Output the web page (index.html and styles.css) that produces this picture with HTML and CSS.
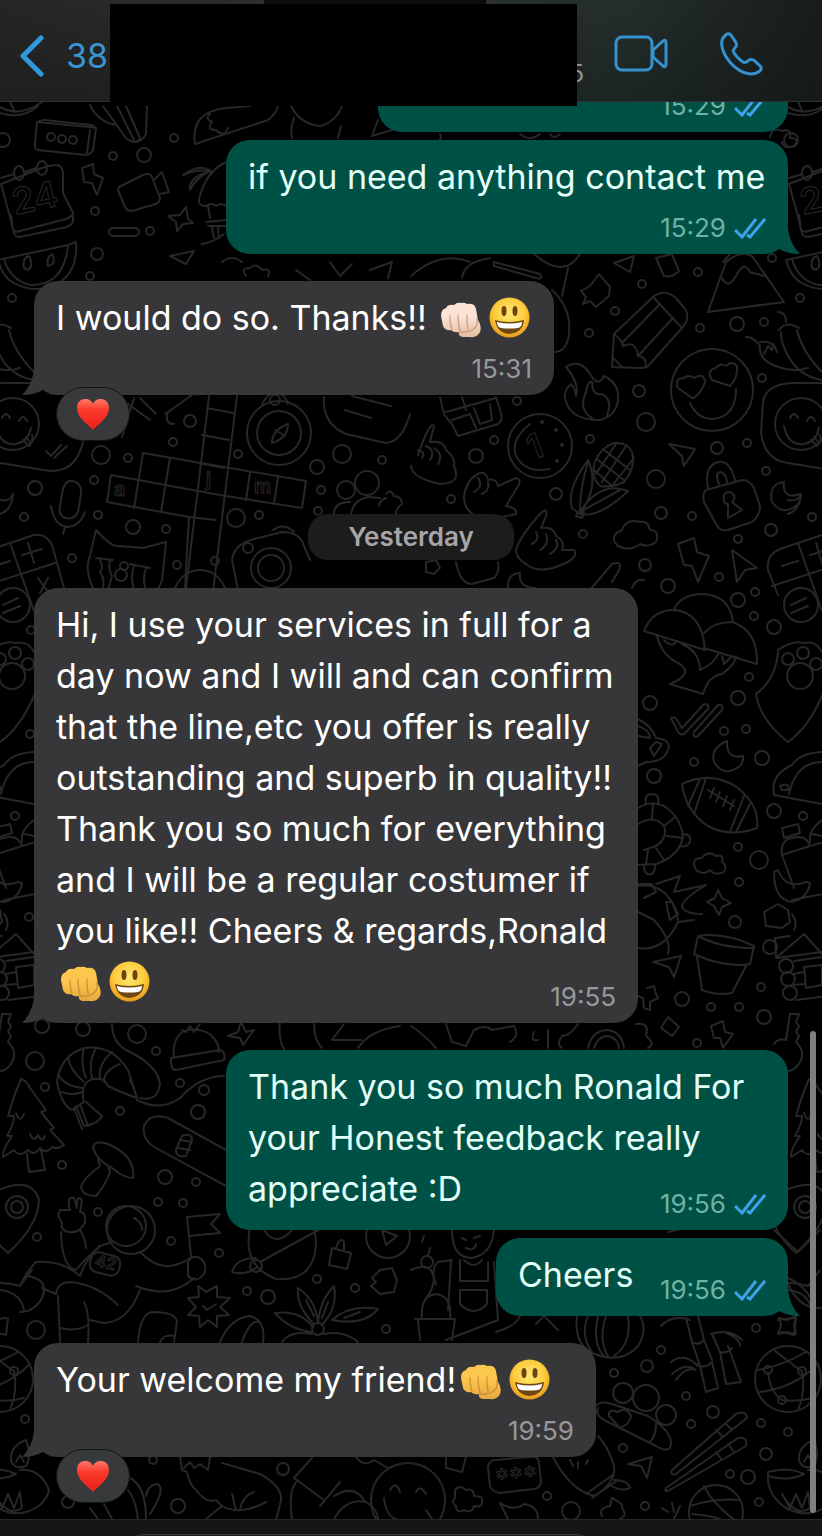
FILE: index.html
```
<!DOCTYPE html>
<html lang="en">

<head>
  <title>Chat</title>
  <meta charset="utf-8">
  <meta name="viewport" content="width=device-width, initial-scale=1">
  <link rel="stylesheet" href="styles.css">
</head>

<body>

  <!-- shared shapes -->
  <svg class="defs" width="0" height="0" aria-hidden="true">
    <defs>
      <radialGradient id="faceFill" cx="50%" cy="40%" r="60%">
        <stop offset="0" stop-color="#ffe873"/>
        <stop offset="0.65" stop-color="#fdcb3c"/>
        <stop offset="1" stop-color="#e9981a"/>
      </radialGradient>
      <linearGradient id="heartFill" x1="0" y1="0" x2="0" y2="1">
        <stop offset="0" stop-color="#ff7a6b"/>
        <stop offset="0.35" stop-color="#fb3a2c"/>
        <stop offset="1" stop-color="#e81f14"/>
      </linearGradient>
      <linearGradient id="fistShade" x1="0" y1="0" x2="0" y2="1">
        <stop offset="0.4" stop-color="#b5601c" stop-opacity="0"/>
        <stop offset="1" stop-color="#b5601c" stop-opacity="0.3"/>
      </linearGradient>
      <symbol id="smile" viewBox="0 0 41 41">
        <circle cx="20.500" cy="20.500" r="20" fill="url(#faceFill)"/>
        <ellipse cx="15" cy="14" rx="2.500" ry="5" fill="#6b4410"/>
        <ellipse cx="26" cy="14" rx="2.500" ry="5" fill="#6b4410"/>
        <path d="M6 23 Q20 27 35 23 Q34 36 20 37 Q8 36 6 23Z" fill="#6e4712"/>
        <path d="M8 25 Q20 28 33 25 Q33 30 29 31 Q20 32 12 31 Q8 30 8 25Z" fill="#fff"/>
      </symbol>
      <symbol id="fist" viewBox="0 0 41 36">
        <path id="fistShape" d="M1 14 Q1 7 6 6 Q8 2 14 3 Q17 0 21 1 Q24 0 27 2 Q35 1 36 7 L38 18 Q42 24 40 30 Q37 36 30 35 L23 35 Q18 34 19 30 Q14 31 11 28 Q5 29 3 24 Z" fill="currentColor"/>
        <path d="M1 14 Q1 7 6 6 Q8 2 14 3 Q17 0 21 1 Q24 0 27 2 Q35 1 36 7 L38 18 Q42 24 40 30 Q37 36 30 35 L23 35 Q18 34 19 30 Q14 31 11 28 Q5 29 3 24 Z" fill="url(#fistShade)"/>
        <path d="M10 14 Q10 22 12 27 M18 13 Q18 22 20 29 M27 13 Q27 22 28 27 M20 30 Q29 31 35 26 Q38 23 37 16" fill="none" stroke="#8a4a1c" stroke-opacity="0.350" stroke-width="1.500" stroke-linecap="round"/>
      </symbol>
      <symbol id="heart" viewBox="0 0 34 33">
        <path d="M17 32 C12 26 1 20 1 10 C1 4 5 1 9 1 C13 1 16 3 17 6 C18 3 21 1 25 1 C29 1 33 4 33 10 C33 20 22 26 17 32Z" fill="url(#heartFill)"/>
      </symbol>
      <symbol id="checks" viewBox="0 0 32 22">
        <path d="M1 13 L8 20 L22 2 M13 18 L16 20 L31 2" fill="none" stroke="#3fa3ea" stroke-width="3"/>
      </symbol>
      <symbol id="tail" viewBox="0 0 30 26">
        <path d="M12 0 C11 10 7 19 0 26 Q12 26 21 21 L30 26 V0Z" fill="currentColor"/>
      </symbol>
    </defs>
  </svg>

  <header class="header">
    <a class="back" href="#chats" aria-label="Back, 38 unread chats">
      <svg width="24" height="42" viewBox="0 0 24 42" aria-hidden="true"><path d="M21 3 L3 21 L21 39"/></svg>
      <span>38</span>
    </a>
    <div class="contact"></div>
    <span class="number">5</span>
    <div class="actions">
      <button type="button" aria-label="Video call">
        <svg width="54" height="37" viewBox="0 0 54 37" aria-hidden="true">
          <rect x="2" y="2" width="36" height="33" rx="6"/>
          <path d="M39 15 L49 6 Q52 4 52 8 V29 Q52 33 49 31 L39 22Z"/>
        </svg>
      </button>
      <button type="button" aria-label="Voice call">
        <svg width="43" height="44" viewBox="0 0 130 132" aria-hidden="true">
          <path class="phone" d="M14 12 Q4 20 5 38 C10 75 45 118 88 126 Q108 128 120 118 Q128 110 122 103 L104 86 Q98 80 88 84 L80 90 Q72 94 66 88 Q50 76 42 62 Q38 56 42 52 L48 44 Q52 36 46 28 L34 10 Q28 2 20 6 Z"/>
        </svg>
      </button>
    </div>
  </header>

  <main class="chat">
    <svg class="wallpaper" viewBox="0 102 822 1417" preserveAspectRatio="xMidYMin slice" aria-hidden="true">
      <!-- this column shows on both sides, one tile apart -->
      <g id="edge">
        <path d="M0 107 Q20 118 42 102 M0 113 Q22 120 38 106 M10 102 L15 112"/>
        <circle cx="3" cy="140" r="7"/>
        <path d="M1 178 L14 174 M25 172 L36 168 M47 166 L58 165 Q62 167 63 172 L63 193 L73 213 L73 221 Q72 225 67 227 L20 237 Q15 237 14 233 L9 213 L1 184Z M11 215 L13 230 Q16 233 20 231 L66 219 Q72 217 73 213"/>
        <ellipse cx="19" cy="173" rx="5" ry="7"/><ellipse cx="42" cy="168" rx="5" ry="7"/>
        <text x="15" y="215" font-size="36" transform="rotate(-12 15 215)">24</text>
        <path d="M-2 260 L68 245 76 242 Q78 270 60 282 Q36 296 12 282 Q2 275 -2 260 M4 259 Q10 280 30 285 Q64 286 68 245 M24 268 Q22 258 29 256 Q34 266 28 270Z M48 266 Q46 258 52 254 Q57 264 48 266"/>
        <path d="M-28 346 Q-34 337 -42 337 M-28 342 Q-14 340 -11 352 M-28 346 Q-30 362 -6 368 Q8 372 20 368 M-7 332 Q-8 345 6 365 Q18 378 34 380 M9 330 Q14 352 34 372 M-9 330 Q-2 320 11 328 M-2 322 Q-2 312 -10 312 M-24 354 L-20 346 -16 350 -14 344"/>
        <path d="M34 383 L5 383 Q-22 384 -25 402 L-27 432 Q-24 460 0 463 L50 471 Q76 472 83 442 M46 451 L51 456 61 445 M54 458 L67 446"/>
        <circle cx="13" cy="424" r="26"/>
        <path d="M2 418 Q6 410 10 418 M19 421 Q23 413 27 421 M-4 426 Q0 446 16 444 Q28 442 31 428 M23 440 L29 446 Q34 442 32 435 M26 437 L30 442"/>
        <path d="M0 500 Q10 502 13 494 Q12 510 0 514"/>
        <path d="M-10 595 L-20 570 Q-22 555 -8 549 L34 535 Q46 533 52 545 L64 588 M10 543 L34 611 M-16 586 L55 563 M22 555 L42 549 M28 543 L34 563 M-6 566 L10 561 M38 578 L48 592 M48 578 L40 593"/>
        <circle cx="13" cy="605" r="17"/>
        <path d="M3 605 L18 598 M3 613 L20 606"/>
        <circle cx="12" cy="676" r="13"/><circle cx="15" cy="653" r="6"/><circle cx="28" cy="664" r="6"/><circle cx="0" cy="659" r="6"/>
        <path d="M-10 650 Q-11 678 -32 694 Q-28 720 0 742 Q20 728 34 696 L40 680 Q44 658 34 652 Q28 640 16 643 Q4 640 -10 650"/>
        <path d="M-14 795 Q-18 775 4 765 Q12 753 34 752 M-14 795 L34 804 M1 794 Q8 762 34 762 M-6 790 L-8 786 Q2 782 0 790Z"/>
        <path d="M-6 855 L6 888 M-6 855 Q-8 840 4 838 Q18 834 22 846 L-6 855 M22 846 L36 842 M-6 828 L10 824 12 833 -4 838Z M34 820 Q20 830 22 842 M24 834 L34 836"/>
        <path d="M-14 872 L-10 870 Q-2 890 18 882 L22 883 Q20 898 4 902 Q-14 900 -14 872 M4 900 L40 893"/>
        <path d="M-24 912 L-10 904 0 910 2 922 -6 928 -22 926Z M4 914 Q10 922 6 930"/>
        <path d="M-12 958 L16 934 34 954 M-12 958 L34 952 M16 967 L34 965 34 985 18 988Z M6 961 L34 957 M6 974 L16 972 M6 985 L16 984 M8 1000 L40 996 M-12 938 L2 936 M-13 938 L-12 956"/>
        <circle cx="-2" cy="966" r="7"/><circle cx="0" cy="979" r="7"/><circle cx="2" cy="993" r="7"/>
        <path d="M2 1014 L11 1014 8 1022 11 1026 8 1032 11 1036 8 1042 Q18 1052 12 1062 Q4 1076 -8 1068 M2 1014 L-2 1040 Q-10 1038 -14 1044"/>
        <path d="M21 1079 Q26 1080 30 1088 L46 1110 41 1112 54 1128 50 1130 64 1145 Q58 1150 52 1147 Q46 1155 40 1148 Q34 1157 28 1150 Q20 1158 14 1150 L3 1157 Q2 1150 12 1136 L7 1136 Q14 1124 14 1116 L8 1116 Q14 1095 21 1079 M27 1154 L29 1172 45 1170 41 1150 M16 1113 Q20 1124 24 1114 M30 1134 Q34 1143 38 1135 Q42 1143 45 1136"/>
        <circle cx="17" cy="1207" r="6"/><circle cx="17" cy="1207" r="11"/>
        <path d="M8 1253 Q38 1226 39 1200 Q34 1183 15 1185 Q-12 1190 -18 1206 Q-16 1232 8 1253Z"/>
        <path d="M-18 1285 Q0 1280 20 1286 L32 1270 M0 1290 Q20 1292 24 1310 M6 1318 L-10 1320 M8 1318 L6 1335 -6 1332"/>
        <circle cx="0" cy="1379" r="33"/>
        <path d="M-30 1370 Q-6 1366 18 1352 M-28 1392 Q6 1388 30 1364 M-14 1350 Q6 1366 14 1371 Q18 1390 10 1410 M-20 1372 Q-18 1392 -6 1400 Q10 1402 24 1398"/>
        <circle cx="14" cy="1371" r="4"/><circle cx="-20" cy="1370" r="4"/><circle cx="-6" cy="1400" r="4"/>
        <path d="M-20 1472 Q-22 1495 -2 1508 Q20 1520 40 1505 Q48 1497 49 1490 Q40 1468 20 1470 M-20 1472 Q0 1466 16 1474 Q0 1482 -20 1476 M11 1460 Q10 1446 26 1440 Q32 1456 26 1466 Q14 1470 11 1460 M16 1462 L20 1455 24 1462 M-6 1494 L2 1508 8 1494 14 1508 20 1492 22 1508 Q8 1518 -6 1494"/>
      </g>
      <use href="#edge" x="788"/>

      <!-- top -->
      <path d="M37 122 L89 127 96 128 93 150 Q91 154 86 155 L38 150 Q34 149 35 144Z M37 122 L44 120 92 125 96 128 M90 130 L87 153"/>
      <circle cx="51" cy="137" r="4"/><circle cx="62" cy="139" r="4"/><circle cx="73" cy="140" r="4"/>
      <path d="M90 105 Q98 122 116 125 M103 106 L126 138 Q136 146 140 138 L126 106 M130 102 L147 106 146 134 Q142 142 134 142 M116 104 L134 140"/>
      <path d="M195 144 Q190 112 226 108 L250 106 M195 144 L268 120 Q278 112 278 104 M210 114 Q204 118 212 122 Q206 130 216 130 Q224 138 228 128 M291 106 Q300 124 320 126 Q336 122 342 106 M294 118 Q290 128 292 138 M341 126 L338 138 M378 120 L372 136 392 130"/>
      <path d="M82 168 L93 164 94 174 103 178 97 195 92 183 84 182Z"/>
      <path d="M119 187 L143 175 Q150 172 152 177 L160 198 Q160 202 156 204 L132 211 Q127 211 125 207 L118 190Z M154 180 L162 172 169 192 160 194"/>
      <path d="M168 216 L180 215 186 207 188 219 193 223 183 224 177 231 176 222Z"/>
      <rect x="109" y="228" width="30" height="8" rx="4"/>
      <path d="M183 175 Q200 162 212 172 M183 175 Q200 168 210 172 M190 190 Q188 178 208 172 Q196 178 190 190 M226 162 Q206 172 200 196 Q196 206 206 206 Q212 202 216 206 Q222 202 226 206 M208 206 L210 218 M206 222 L226 220 M208 226 L226 226 M212 228 L214 238 M218 228 L219 238 M202 244 Q214 242 224 234"/>
      <path d="M170 256 L194 251 186 264Z M222 262 Q232 254 242 262 M246 276 Q240 268 250 268 Q256 262 262 270 Q272 268 268 276 M296 270 L310 280 M330 262 L340 276 352 264 M370 270 L392 262 388 278"/>
      <path d="M590 118 Q606 128 622 118 M440 134 Q444 142 430 142 M520 134 Q530 142 540 134 M550 134 Q554 140 560 134"/>
      <path d="M770 137 Q772 126 782 131 Q792 128 790 138 Q800 138 794 146 Q784 150 782 142"/>

      <!-- right of the first replies -->
      <path d="M411 276 Q440 250 470 262 M462 278 Q464 262 490 258 M494 262 L540 274 Q544 280 536 278 L494 266Z M534 254 Q564 280 580 254 M568 268 L562 296 M552 290 Q574 310 568 340 Q564 352 555 352"/>
      <path d="M614 263 L634 256 630 272Z M656 258 L672 254 679 271 Q672 278 664 276Z M723 262 L730 254 M708 312 L726 262 Q740 250 752 256 L784 302Z M722 278 Q728 290 736 276 Q744 260 750 272 L764 276"/>
      <path d="M581 291 L590 286 599 274 610 287 609 296 596 307 590 301 583 304 586 297Z"/>
      <path d="M614 334 L653 297 Q664 288 676 298 L686 310 Q690 320 682 328 L648 366 Q646 368 640 368 L612 367Z M653 297 L682 328 M660 304 L623 342 M673 318 L638 356 M614 334 Q622 340 623 346 Q636 340 638 356 Q646 356 646 366 M612 357 L622 367"/>
      <path d="M566 367 Q580 358 590 374 Q598 388 604 376 Q620 384 618 400 Q616 416 600 420 Q572 420 566 402 Q562 392 571 384 Q576 390 576 396 Q580 384 566 367 M592 418 Q578 410 586 392 Q588 380 592 382 Q592 396 602 394 Q614 400 606 418"/>
      <circle cx="712" cy="390" r="41"/>
      <path d="M692 398 L678 388 Q674 378 684 378 Q688 374 694 378 Q704 372 705 382 Q702 392 694 398Z M730 386 L712 380 Q706 370 716 368 Q720 362 726 366 Q732 360 737 366 Q738 378 730 386Z M690 403 Q698 420 714 419 Q736 416 736 389"/>
      <path d="M669 444 L695 449 684 466 682 456Z"/>
      <circle cx="540" cy="446" r="32"/>
      <path d="M530 424 Q510 440 516 456 Q526 474 550 469"/>
      <text x="532" y="460" font-size="34" transform="rotate(-20 532 460)">1</text>
      <circle cx="542" cy="422" r="1"/><circle cx="556" cy="430" r="1"/><circle cx="562" cy="445" r="1"/><circle cx="557" cy="461" r="1"/>
      <path d="M440 397 L444 414 Q448 420 452 424 L458 436 498 424 Q504 420 500 410 L496 397 M446 412 L496 398 M462 397 L466 410 M452 420 L470 414 476 428 M474 408 L480 424 492 420 490 404"/>
      <path d="M418 455 Q430 420 434 426 L430 442 Q444 440 446 450 Q456 458 454 466 Q462 484 440 484 Q412 478 411 466 M418 450 Q426 452 422 458 M426 446 Q436 450 430 460 M434 448 Q444 454 438 464"/>
      <path d="M464 497 Q466 480 478 474 Q486 470 488 480 Q496 478 498 486 L516 478 Q522 480 518 486 L506 506 Q518 508 516 514 Q494 520 476 516 Q464 510 464 497 M478 478 Q484 486 474 492 M488 482 Q490 490 482 494"/>
      <path d="M595 462 Q600 448 614 443 Q628 442 632 452 Q636 468 624 482 Q612 488 600 486 Q590 476 595 462 M604 450 L630 470 M598 460 L624 480 M594 470 L612 486 M616 444 L596 474 M626 446 L602 482 M634 458 L612 486"/>
      <path d="M588 460 Q566 490 572 508 L580 514 Q600 486 588 460 M580 514 Q600 518 628 491 Q600 480 580 512 M588 462 Q580 488 580 510 M580 512 L620 490 M578 512 L584 512 582 518 576 516Z"/>
      <path d="M708 488 Q704 466 718 462 Q730 460 735 480 M719 484 Q714 472 721 472 Q726 474 727 482 M706 490 L742 480 Q750 480 754 488 L760 506 Q760 516 752 522 L728 530 Q720 532 716 524 L704 502 Q702 494 706 490 M724 500 Q722 492 730 492 Q738 496 732 502 L742 510 728 518 728 504Q724 504 724 500"/>
      <path d="M784 482 Q768 484 772 502 Q782 516 796 506 Q802 500 800 494 Q782 500 784 482"/>
      <path d="M618 546 Q608 536 622 530 Q626 518 640 522 Q648 520 650 530 Q660 530 656 542 Q648 548 640 544 Q630 552 618 546Z"/>
      <path d="M678 544 L694 538 697 552 709 556 698 582 692 566 684 565Z M732 550 L757 568 745 570 737 582Z"/>
      <path d="M516 550 Q520 536 540 514 Q548 506 546 516 L541 528 Q554 526 556 536 Q566 542 562 550 L574 550 Q578 556 568 562 Q540 576 526 564 Q516 558 516 550 M536 532 Q540 540 532 544 M546 534 Q550 544 540 550 M556 540 Q560 548 550 554"/>
      <path d="M426 562 L436 560 440 568 434 574 426 572Z M456 562 Q460 584 472 584 L494 578 Q500 572 498 562 M508 590 Q506 574 520 573 Q518 588 536 588 M590 590 L612 564 Q624 560 618 572 L612 582 M632 588 Q636 578 644 580"/>

      <!-- left of the date chip -->
      <path d="M128 404 L150 420 M140 398 L156 414 M134 398 L122 437 M165 414 L192 395 M168 412 Q164 424 174 424"/>
      <path d="M143 453 L306 481 302 508 M111 475 L220 495 302 508 M107 502 L189 517 216 520 M143 453 L134 508 M111 475 L107 502 M170 458 L161 512 M209 396 L184 605 211 608 237 396 M207 408 L233 413 M202 435 L229 440 M198 463 L224 468 M250 473 L246 500 M278 477 L274 504 M189 517 L184 605"/>
      <text x="114" y="496" font-size="19">a</text><text x="206" y="486" font-size="19">j</text><text x="254" y="493" font-size="19">m</text>
      <circle cx="279" cy="433" r="32"/><circle cx="279" cy="433" r="22"/><circle cx="275" cy="400" r="5"/>
      <path d="M272 443 Q272 430 288 424 Q288 438 272 443 M275 430 L285 436 M262 405 Q266 394 275 392 Q286 394 288 404"/>
      <path d="M324 397 Q322 424 346 434 L386 443 Q402 442 410 414 M345 410 L371 418 M352 396 L391 406"/>
      <path d="M62 494 Q64 480 72 481 Q82 482 81 494 L78 512 Q74 520 66 518 Q58 516 60 506Z M51 506 Q54 526 68 527 Q80 526 85 512 M65 527 L63 534"/>
      <path d="M96 530 L90 556 Q84 570 94 590 M96 530 Q112 548 120 546 L143 548 166 542 162 580 158 590 M96 558 L113 560 M100 560 Q104 568 100 572 Q106 580 102 590 M110 560 Q108 570 112 576 L108 590 M130 564 L150 568 M134 566 Q130 576 134 590 M146 568 Q142 580 146 590"/>
      <circle cx="121" cy="575" r="6"/><circle cx="124" cy="566" r="4"/>
      <path d="M232 560 Q234 544 254 539 L282 532 Q300 532 304 546 L310 560 M232 560 L238 590 M273 530 Q284 522 294 532"/>
      <circle cx="271" cy="568" r="20"/><circle cx="271" cy="568" r="13"/><circle cx="248" cy="548" r="5"/>
      <circle cx="200" cy="596" r="26"/>
      <circle cx="346" cy="490" r="9"/><circle cx="367" cy="483" r="12"/>
      <path d="M334 514 Q334 502 350 502 M351 516 Q352 500 368 497 L380 498 M386 494 Q390 488 394 496 Q402 496 402 504 Q396 508 396 514 M379 506 Q380 500 386 498"/>

      <!-- beside the long message -->
      <path d="M644 631 Q652 610 674 610 Q702 612 705 650Z M674 610 Q680 594 704 594 Q730 596 733 622 M704 633 Q714 622 732 622 Q758 630 757 664 L704 648 M657 636 Q662 656 680 664 Q694 674 670 684 L703 694 Q708 676 722 674 Q736 664 736 656 M664 640 Q672 648 676 642 M682 644 Q700 652 700 670 Q714 664 718 654 M722 656 L724 664 732 656"/>
      <path d="M671 718 Q674 716 677 720 L682 728 704 704 Q710 704 708 709 L684 734 Q680 736 677 730Z M694 732 L718 705 Q724 704 722 710 L698 736 Q692 738 694 732"/>
      <path d="M727 741 Q710 748 714 762 Q724 778 740 766 Q744 760 743 756 Q726 760 727 741"/>
      <path d="M638 719 Q652 726 656 738 Q672 740 668 750 Q664 762 646 762 L638 766 M650 748 L656 742 662 744 654 756Z M638 726 Q650 730 650 738 L638 736"/>
      <path d="M682 784 Q712 770 738 788 Q760 806 757 828 Q730 838 708 826 Q686 812 682 784 M700 779 L688 806 M706 778 L694 814 M744 796 L730 832 M750 804 L736 832 M708 790 L734 806 M714 788 L710 798 M720 792 L716 802 M727 796 L723 806 M734 800 L730 810"/>
      <path d="M646 804 Q644 794 652 794 Q660 794 658 804 M638 808 Q650 800 664 806 Q680 816 683 836 Q680 856 656 864 L638 865 M638 824 Q654 814 664 826 Q668 838 656 846 L644 850 M653 805 L652 818 M674 818 L664 826 M683 838 L667 836 M664 860 L656 848 M646 864 L648 850 M682 834 Q692 834 690 842 Q686 848 680 846 M644 866 Q644 876 652 874 Q656 870 655 864"/>
      <path d="M696 870 Q690 858 702 858 Q708 850 716 856 Q724 854 722 862 Q728 866 724 872 Q714 876 710 870 Q704 876 696 870"/>
      <path d="M718 890 L722 898 731 903 722 907 719 915 714 906 707 902 715 898Z M656 884 L680 876 674 892 706 885 Q684 898 682 906 Q684 914 702 914 M638 886 Q670 882 678 920 M666 902 L672 902 678 914 670 920Z M638 884 L652 884 656 892 644 898 M638 912 L654 920 Q672 940 668 954 M638 948 Q664 952 678 922 L694 920"/>
      <path d="M653 962 L681 956 674 977 669 967Z M698 936 Q724 932 754 946 L750 964 Q724 968 694 954Z M697 956 L702 990 Q718 996 732 993 L746 966 M698 936 Q720 948 754 948"/>
      <path d="M647 988 L654 986 656 994 658 998 650 1002 650 1010 644 1008 643 998 638 996M661 1028 L668 1017 679 1027 672 1036Z M711 1026 L723 1021 725 1032 733 1034 723 1048 720 1038 714 1038Z"/>

      <!-- behind the seam above the green reply -->
      <path d="M446 1024 L452 1042 466 1046 474 1030 Q486 1024 492 1030 L514 1026 Q520 1036 510 1042 M548 1030 L548 1048 M534 1032 Q530 1042 538 1040 M578 1024 Q570 1036 562 1036 Q556 1044 562 1048 M588 1048 Q592 1030 608 1030 Q622 1032 624 1048 M594 1048 Q598 1036 608 1036 Q618 1038 619 1048 M636 1024 Q650 1022 646 1036 Q656 1044 648 1048 M411 1026 Q426 1036 436 1048"/>
      <path d="M112 1024 Q112 1044 130 1052 Q158 1066 160 1084 Q158 1102 140 1098 M174 1058 Q172 1040 182 1032 Q196 1026 210 1034 Q220 1044 219 1052 M171 1058 L220 1050 Q226 1052 224 1060 L176 1070 Q170 1070 171 1058 M182 1030 L186 1032 190 1026 194 1032 200 1024 M228 1036 L238 1032 241 1022 246 1032 254 1030 248 1038 243 1045 240 1038Z M280 1022 Q278 1040 284 1049 M314 1024 Q314 1040 322 1048 M332 1040 L344 1024 M332 1040 L362 1040 M358 1048 Q370 1030 400 1026"/>
      <path d="M137 1098 L128 1070 Q112 1044 84 1048 Q60 1056 57 1082 Q62 1106 72 1110 L84 1102 Q80 1086 90 1080 Q104 1076 108 1086 Q120 1092 137 1098 M84 1048 Q80 1064 86 1078 M96 1048 Q88 1062 92 1078 M112 1052 Q98 1064 100 1078 M120 1064 Q104 1070 104 1082 M68 1058 Q70 1070 84 1082 M58 1074 Q64 1086 82 1088 M62 1092 Q72 1096 82 1092 M74 1108 L82 1129 M86 1102 L102 1116 Q98 1124 84 1126 L76 1106 M88 1126 L80 1104 M134 1088 L130 1080"/>
      <path d="M137 1100 Q160 1112 180 1098 Q200 1076 224 1076 M226 1150 L168 1118 Q150 1112 144 1126 Q142 1140 156 1148 L226 1186 M182 1136 Q192 1132 192 1140 L186 1156 Q176 1158 176 1150Z M180 1140 L192 1142 M178 1148 L190 1150"/>
      <path d="M93 1147 Q94 1140 108 1144 Q136 1156 133 1178 Q124 1178 112 1168 Q96 1160 93 1147 M98 1158 L100 1166 Q84 1178 81 1186 Q82 1196 96 1196 Q106 1184 110 1172 L108 1166"/>

      <!-- astronaut -->
      <path d="M62 1222 Q56 1216 60 1210 L70 1210 Q66 1196 74 1198 L77 1208 Q76 1194 82 1200 L80 1212 Q86 1212 85 1222 Q80 1234 68 1232 Q60 1230 62 1222 M61 1232 Q62 1268 76 1270 Q84 1260 100 1246 L112 1242 M80 1230 Q86 1240 86 1248"/>
      <circle cx="131" cy="1230" r="24"/><circle cx="126" cy="1226" r="20"/>
      <path d="M134 1218 Q142 1222 142 1230 M140 1252 Q156 1268 170 1266 Q182 1264 190 1258 M194 1278 Q170 1300 136 1286 M80 1276 Q86 1258 100 1246 M80 1276 Q62 1260 36 1262 Q26 1272 20 1286 M56 1294 Q58 1282 70 1282 Q96 1284 118 1305 M58 1296 L60 1342 M84 1302 Q90 1312 88 1342 M140 1290 Q128 1322 104 1323 L90 1320 M60 1328 Q76 1332 88 1325 M28 1276 Q50 1280 42 1298 Q34 1312 20 1312 M42 1288 L56 1294"/>
      <rect x="90" y="1254" width="30" height="20" rx="8" transform="rotate(14 105 1264)"/>
      <text x="95" y="1268" font-size="16" transform="rotate(14 105 1264)">42</text>
      <path d="M191 1256 L187 1217 220 1214 211 1224 220 1233 189 1236 M188 1262 Q192 1254 200 1258 Q208 1264 204 1274 Q196 1284 188 1276Z"/>
      <path d="M198 1286 L206 1292 217 1286 217 1297 230 1298 220 1307 229 1315 217 1316 217 1327 208 1320 200 1327 199 1316 188 1315 196 1307 188 1298 199 1297Z M203 1306 L207 1310 216 1304"/>
      <path d="M138 1342 Q140 1314 152 1312 Q176 1312 177 1322 L174 1342 M160 1342 Q164 1334 174 1336 M220 1342 Q230 1318 250 1316 Q266 1320 263 1342 M242 1342 Q250 1320 258 1322"/>
      <path d="M250 1228 Q242 1266 276 1279 Q316 1282 316 1240 L314 1228 M264 1230 Q276 1248 292 1230 M260 1262 L322 1228 M256 1258 Q236 1258 232 1272 Q244 1276 256 1268"/>
      <circle cx="256" cy="1266" r="6"/>
      <path d="M332 1248 L351 1253 347 1269 329 1265Z M336 1248 Q340 1236 344 1242 L344 1251 M382 1230 L397 1236 386 1245Z M372 1278 L380 1270 392 1268 397 1280 394 1292 380 1294 371 1286 376 1282Z"/>
      <circle cx="388" cy="1236" r="22"/>
      <circle cx="318" cy="1329" r="6"/>
      <path d="M314 1324 Q296 1306 298 1288 Q316 1300 318 1323 Q320 1300 334 1286 Q338 1308 322 1325 M332 1320 Q350 1304 378 1309 Q364 1326 332 1320 M312 1332 Q290 1330 275 1313 Q300 1310 313 1327 M312 1334 Q290 1330 282 1342 M324 1334 Q344 1330 358 1342 M306 1300 L314 1316 M328 1302 L322 1318 M344 1318 L360 1312"/>

      <!-- gardener, pumpkin, bamboo -->
      <path d="M452 1230 Q452 1258 472 1258 Q492 1254 494 1230 M462 1238 L466 1240 M474 1238 L480 1236 M466 1248 Q474 1252 476 1244 M460 1260 L460 1281 488 1281 488 1262 M452 1260 L438 1262 Q430 1270 436 1284 M451 1262 L448 1310 M460 1290 L487 1290 487 1304 Q474 1318 460 1304Z M494 1262 L498 1320 446 1340 M464 1260 Q474 1270 482 1260 M496 1332 Q516 1326 520 1316"/>
      <circle cx="427" cy="1262" r="6"/>
      <path d="M411 1270 Q432 1260 434 1280 Q432 1292 426 1298 M422 1318 Q420 1296 436 1294 Q452 1296 450 1318 M415 1319 L455 1319 452 1340 M418 1320 L420 1340 M422 1242 L424 1236 M428 1256 L430 1248"/>
      <path d="M536 1324 L544 1316 558 1330 M577 1316 Q574 1342 590 1352 Q620 1366 638 1346 Q648 1330 640 1316 M598 1316 Q592 1344 604 1356 M628 1316 Q632 1344 614 1356 M606 1316 Q598 1340 608 1356 M588 1316 Q580 1336 592 1352"/>
      <path d="M661 1326 Q672 1314 690 1320 M686 1318 L692 1342 M698 1316 L704 1340 Q698 1346 692 1342 M692 1342 L700 1366 M704 1340 L712 1360 M700 1366 Q706 1368 712 1362 L718 1388 706 1392Z M671 1362 Q684 1352 698 1366 M672 1374 Q686 1362 696 1370 Q686 1366 676 1380 M712 1334 L720 1352 M720 1352 L726 1384 741 1382 728 1346 M711 1334 Q730 1328 742 1340 M724 1332 Q740 1338 740 1346 M720 1352 Q726 1354 732 1348"/>
      <path d="M774 1230 L798 1252 820 1230 M779 1318 L787 1320 796 1316 794 1325 796 1334 787 1332 778 1334 781 1325Z M788 1278 Q810 1288 815 1310 M788 1284 Q800 1310 822 1308 M668 1232 L684 1228"/>
      <circle cx="623" cy="1393" r="10"/><circle cx="646" cy="1398" r="13"/><circle cx="666" cy="1415" r="10"/>
      <path d="M596 1406 Q600 1400 612 1404 L648 1416 Q676 1434 670 1448 Q666 1452 656 1446 L604 1420 Q594 1414 598 1408 M620 1428 L609 1416 Q608 1408 618 1412 Q626 1406 631 1416 Q630 1424 620 1428 M656 1424 Q656 1436 650 1442"/>
      <path d="M672 1470 L736 1414 Q746 1410 747 1418 L676 1474 Q670 1476 672 1470 M666 1488 L738 1438 Q748 1436 746 1446 L668 1491 Q664 1492 666 1488 M716 1430 L722 1436 M726 1424 L732 1430 M716 1452 L722 1460 M728 1444 L734 1452"/>
      <path d="M628 1464 L652 1457 647 1478 641 1466Z M553 1457 Q570 1490 594 1496 Q616 1484 614 1466 Q608 1446 598 1436 M586 1494 L614 1474 M592 1498 L618 1480 M614 1480 Q628 1480 630 1488 Q622 1492 612 1486 M570 1460 L573 1466 M578 1462 L578 1468 M588 1460 L586 1464"/>
      <path d="M494 1460 L530 1457 Q538 1456 539 1462 L541 1482 Q540 1488 534 1489 L500 1493 Q492 1492 490 1486 L488 1468 Q488 1462 494 1460Z"/>
      <text x="496" y="1488" font-size="26" transform="rotate(-5 496 1488)">***</text>
      <path d="M446 1457 L446 1468 462 1472 466 1457 M455 1490 Q460 1484 466 1490 Q474 1488 474 1496 Q484 1496 482 1502 Q482 1508 474 1506 Q472 1514 464 1510 Q456 1514 456 1506 Q450 1502 455 1498Z M500 1503 Q514 1512 524 1504 Q538 1506 538 1519 M500 1503 L508 1519 M602 1516 Q598 1508 610 1506 L612 1498 Q624 1504 622 1508 Q628 1516 620 1519 M662 1508 L668 1512 M672 1503 L674 1512 M680 1506 L674 1519"/>
      <circle cx="716" cy="1512" r="27"/>
      <path d="M690 1506 Q716 1498 738 1500 M704 1486 Q712 1504 740 1524 M692 1514 Q712 1516 720 1519"/>

      <!-- bottom left -->
      <path d="M180 1457 L182 1470 187 1472 Q190 1486 196 1490 Q206 1504 216 1500 L222 1506 206 1519 M184 1468 L190 1462 194 1468 200 1464 208 1470 210 1457 M222 1463 L260 1474 Q282 1486 281 1500 Q278 1514 276 1519 M222 1506 Q240 1516 266 1502 M254 1492 Q242 1496 240 1510 M232 1494 L236 1510 M130 1478 Q146 1486 146 1519 M128 1490 Q136 1500 138 1519 M146 1496 Q148 1484 158 1484 Q166 1490 150 1514 M90 1508 L98 1519 M104 1504 L112 1519"/>
      <path d="M294 1478 L312 1458 M294 1478 L324 1500 M320 1506 L340 1482 M292 1519 Q288 1492 296 1482 M334 1519 Q346 1498 366 1502 Q378 1510 378 1519 M334 1496 Q354 1484 364 1500 M356 1457 Q364 1468 374 1460 L388 1468"/>
      <circle cx="408" cy="1500" r="37"/>
      <path d="M390 1490 Q396 1480 400 1492 M416 1492 Q420 1484 426 1494 M384 1498 Q386 1516 396 1519 M426 1510 L432 1519"/>

      <!-- dots -->
      <circle cx="174" cy="138" r="4"/><circle cx="113" cy="156" r="4"/><circle cx="144" cy="155" r="7"/><circle cx="95" cy="211" r="4"/><circle cx="150" cy="231" r="4"/><circle cx="97" cy="254" r="6"/><circle cx="12" cy="298" r="4"/><circle cx="90" cy="276" r="4"/><circle cx="772" cy="258" r="4"/>
      <circle cx="698" cy="272" r="4"/><circle cx="642" cy="284" r="4"/><circle cx="615" cy="311" r="4"/><circle cx="589" cy="333" r="4"/><circle cx="800" cy="298" r="4"/><circle cx="737" cy="324" r="7"/><circle cx="764" cy="322" r="4"/><circle cx="700" cy="328" r="4"/><circle cx="762" cy="378" r="4"/>
      <circle cx="639" cy="391" r="6"/><circle cx="646" cy="422" r="9"/><circle cx="517" cy="401" r="4"/><circle cx="494" cy="440" r="4"/><circle cx="476" cy="456" r="7"/><circle cx="590" cy="439" r="4"/><circle cx="717" cy="448" r="6"/><circle cx="747" cy="443" r="4"/><circle cx="656" cy="479" r="9"/><circle cx="661" cy="513" r="6"/><circle cx="556" cy="494" r="6"/><circle cx="451" cy="499" r="4"/><circle cx="766" cy="471" r="4"/><circle cx="692" cy="516" r="4"/><circle cx="583" cy="534" r="4"/><circle cx="812" cy="517" r="4"/><circle cx="771" cy="530" r="6"/><circle cx="645" cy="565" r="6"/><circle cx="738" cy="539" r="4"/><circle cx="719" cy="577" r="4"/>
      <circle cx="190" cy="421" r="6"/><circle cx="173" cy="442" r="4"/><circle cx="101" cy="455" r="9"/><circle cx="128" cy="458" r="4"/><circle cx="238" cy="454" r="4"/><circle cx="35" cy="488" r="7"/><circle cx="94" cy="480" r="4"/><circle cx="24" cy="517" r="4"/><circle cx="98" cy="515" r="4"/><circle cx="133" cy="527" r="7"/><circle cx="166" cy="529" r="4"/><circle cx="236" cy="518" r="9"/><circle cx="259" cy="515" r="4"/><circle cx="72" cy="558" r="4"/><circle cx="177" cy="565" r="4"/><circle cx="215" cy="561" r="4"/><circle cx="342" cy="454" r="9"/><circle cx="317" cy="467" r="7"/><circle cx="382" cy="460" r="4"/><circle cx="321" cy="490" r="4"/><circle cx="318" cy="511" r="4"/>
      <circle cx="668" cy="586" r="7"/><circle cx="738" cy="600" r="7"/><circle cx="755" cy="592" r="4"/><circle cx="754" cy="616" r="4"/><circle cx="774" cy="627" r="7"/><circle cx="749" cy="677" r="4"/><circle cx="738" cy="698" r="7"/><circle cx="650" cy="703" r="7"/><circle cx="724" cy="731" r="4"/><circle cx="746" cy="729" r="4"/><circle cx="694" cy="762" r="4"/><circle cx="762" cy="758" r="7"/><circle cx="654" cy="776" r="7"/><circle cx="774" cy="811" r="7"/><circle cx="803" cy="816" r="4"/><circle cx="738" cy="847" r="4"/><circle cx="759" cy="860" r="9"/><circle cx="739" cy="882" r="4"/>
      <circle cx="15" cy="816" r="4"/><circle cx="31" cy="630" r="4"/><circle cx="30" cy="734" r="4"/><circle cx="29" cy="917" r="4"/><circle cx="735" cy="922" r="6"/><circle cx="770" cy="947" r="7"/><circle cx="761" cy="987" r="4"/><circle cx="682" cy="999" r="7"/><circle cx="711" cy="1007" r="4"/><circle cx="739" cy="1007" r="4"/><circle cx="764" cy="1017" r="7"/><circle cx="697" cy="1043" r="4"/>
      <circle cx="42" cy="1026" r="7"/><circle cx="83" cy="1029" r="7"/><circle cx="137" cy="1034" r="9"/><circle cx="35" cy="1061" r="9"/><circle cx="156" cy="1051" r="4"/><circle cx="45" cy="1087" r="4"/><circle cx="120" cy="1111" r="4"/><circle cx="180" cy="1083" r="4"/><circle cx="204" cy="1090" r="5"/><circle cx="198" cy="1112" r="7"/><circle cx="62" cy="1165" r="4"/><circle cx="165" cy="1177" r="7"/><circle cx="196" cy="1182" r="4"/><circle cx="158" cy="1202" r="4"/><circle cx="183" cy="1203" r="4"/><circle cx="98" cy="1212" r="4"/>
      <circle cx="37" cy="1237" r="4"/><circle cx="171" cy="1241" r="4"/><circle cx="219" cy="1253" r="4"/><circle cx="36" cy="1330" r="9"/><circle cx="247" cy="1291" r="4"/><circle cx="268" cy="1297" r="7"/><circle cx="317" cy="1279" r="4"/><circle cx="355" cy="1288" r="4"/><circle cx="386" cy="1329" r="4"/><circle cx="25" cy="1419" r="4"/><circle cx="153" cy="1460" r="4"/><circle cx="283" cy="1469" r="6"/><circle cx="178" cy="1506" r="7"/><circle cx="68" cy="1502" r="6"/>
      <circle cx="661" cy="1350" r="4"/><circle cx="647" cy="1366" r="6"/><circle cx="614" cy="1373" r="4"/><circle cx="756" cy="1328" r="4"/><circle cx="686" cy="1396" r="4"/><circle cx="713" cy="1412" r="6"/><circle cx="691" cy="1424" r="4"/><circle cx="761" cy="1423" r="4"/><circle cx="788" cy="1432" r="4"/><circle cx="766" cy="1454" r="6"/><circle cx="730" cy="1474" r="4"/><circle cx="748" cy="1477" r="7"/><circle cx="623" cy="1448" r="4"/><circle cx="547" cy="1496" r="4"/><circle cx="571" cy="1511" r="9"/><circle cx="645" cy="1506" r="4"/><circle cx="759" cy="1502" r="4"/>
    </svg>

    <div class="messages">

      <div class="bubble sent w-50">
        <p class="text"></p>
        <div class="time">15:29 <svg width="32" height="22" role="img" aria-label="Read"><use href="#checks"/></svg></div>
      </div>

      <div class="bubble sent w-70">
        <p class="text">if you need anything contact me</p>
        <div class="time">15:29 <svg width="32" height="22" role="img" aria-label="Read"><use href="#checks"/></svg></div>
        <svg class="tail" width="30" height="26" aria-hidden="true"><use href="#tail"/></svg>
      </div>

      <div class="bubble received first w-65">
        <p class="text">I would do so. Thanks!! <svg class="emoji light" width="41" height="36" role="img" aria-label="fist"><use href="#fist"/></svg><svg class="emoji" width="41" height="41" role="img" aria-label="smile"><use href="#smile"/></svg></p>
        <div class="time">15:31</div>
        <svg class="tail" width="30" height="26" aria-hidden="true"><use href="#tail"/></svg>
        <div class="reaction"><svg width="34" height="33" role="img" aria-label="heart"><use href="#heart"/></svg></div>
      </div>

      <div class="date">Yesterday</div>

      <div class="bubble received w-75">
        <p class="text">Hi, I use your services in full for a day now and I will and can confirm that the line,etc you offer is really outstanding and superb in quality!! Thank you so much for everything and I will be a regular costumer if you like!! Cheers &amp; regards,Ronald <svg class="emoji" width="41" height="36" role="img" aria-label="fist"><use href="#fist"/></svg><svg class="emoji" width="41" height="41" role="img" aria-label="smile"><use href="#smile"/></svg></p>
        <div class="time inline">19:55</div>
        <svg class="tail" width="30" height="26" aria-hidden="true"><use href="#tail"/></svg>
      </div>

      <div class="bubble sent first w-70">
        <p class="text">Thank you so much Ronald For your Honest feedback really appreciate :D</p>
        <div class="time inline">19:56 <svg width="32" height="22" role="img" aria-label="Read"><use href="#checks"/></svg></div>
      </div>

      <div class="bubble sent w-37">
        <p class="text">Cheers</p>
        <div class="time inline">19:56 <svg width="32" height="22" role="img" aria-label="Read"><use href="#checks"/></svg></div>
        <svg class="tail" width="30" height="26" aria-hidden="true"><use href="#tail"/></svg>
      </div>

      <div class="bubble received first w-70">
        <p class="text">Your welcome my friend!<svg class="emoji" width="41" height="36" role="img" aria-label="fist"><use href="#fist"/></svg><svg class="emoji" width="41" height="41" role="img" aria-label="smile"><use href="#smile"/></svg></p>
        <div class="time">19:59</div>
        <svg class="tail" width="30" height="26" aria-hidden="true"><use href="#tail"/></svg>
        <div class="reaction"><svg width="34" height="33" role="img" aria-label="heart"><use href="#heart"/></svg></div>
      </div>

    </div>

    <div class="scrollbar"></div>
  </main>

  <footer class="footer">
    <div class="compose"></div>
  </footer>

</body>

</html>
```

FILE: styles.css
```
* {
  box-sizing: border-box;
}

body {
  margin: 0;
  height: 100vh;
  display: flex;
  flex-direction: column;
  overflow: hidden;
  background: #000;
  color: #fff;
  font-family: Inter, "Liberation Sans", sans-serif;
}

.defs {
  position: absolute;
}

/* header */

.header {
  position: relative;
  z-index: 2;
  flex: none;
  display: flex;
  height: 102px;
  padding-top: 4px;
  border-bottom: 1px solid #2c302f;
  background: linear-gradient(#0c0c0c, #0c0c0c) 44% 0 / 27% 4px no-repeat,
    linear-gradient(100deg, rgba(30, 30, 31, 0.6) 0%, rgba(30, 30, 31, 0) 40%, rgba(24, 44, 39, 0.5) 75%, rgba(20, 24, 24, 0.9) 100%),
    linear-gradient(#303031, #1f2020);
}

.back {
  flex: none;
  display: flex;
  align-items: center;
  gap: 22px;
  width: 110px;
  padding: 6px 0 0 20px;
  color: #3b93cf;
  font-size: 34px;
  text-decoration: none;
}

.back svg {
  fill: none;
  stroke: #2f9bdc;
  stroke-width: 5;
  stroke-linecap: round;
  stroke-linejoin: round;
}

.contact {
  position: relative;
  z-index: 1;
  flex: 1;
  height: 102px;
  background: #000;
}

.number {
  align-self: flex-end;
  margin: 0 0 12px -8px;
  color: #8f9392;
  font-size: 24px;
  line-height: 30px;
}

.actions {
  flex: none;
  display: flex;
  align-items: center;
  gap: 52px;
  margin-left: 30px;
  padding: 2px 59px 0 0;
}

.actions button {
  padding: 0;
  border: 0;
  background: none;
  line-height: 0;
}

.actions svg {
  fill: none;
  stroke: #3492cf;
  stroke-width: 3;
  stroke-linejoin: round;
}

.actions .phone {
  stroke-width: 9;
}

/* chat */

.chat {
  position: relative;
  flex: 1;
  min-height: 0;
  display: flex;
  overflow: hidden;
}

.wallpaper {
  position: absolute;
  top: 0;
  left: 0;
  width: 100%;
  height: 100%;
  fill: none;
  stroke: #272727;
  stroke-width: 2;
  stroke-linecap: round;
  stroke-linejoin: round;
}

.wallpaper text {
  font-weight: 600;
  stroke-width: 1;
}

.messages {
  position: relative;
  flex: 1;
  display: flex;
  flex-direction: column;
  justify-content: flex-end;
  gap: 8px;
  padding: 0 34px 62px;
}

.bubble {
  position: relative;
  flex: none;
  display: flex;
  flex-direction: column;
  padding: 11px 22px 12px;
  border-radius: 24px;
}

.sent {
  align-self: flex-end;
  background: #005145;
  color: #e4fffa;
}

.received {
  align-self: flex-start;
  background: #373739;
}

.first {
  margin-top: 19px;
}

.w-37 {
  width: 292px;
}

.w-50 {
  width: 410px;
}

.w-65 {
  width: 520px;
}

.w-70 {
  width: 562px;
}

.w-75 {
  width: 604px;
}

.text {
  min-height: 51px;
  margin: 0 -8px 0 0;
  font-size: 34px;
  line-height: 51px;
}

.time {
  align-self: flex-end;
  display: flex;
  align-items: center;
  gap: 8px;
  margin-top: 12px;
  color: #98989c;
  font-size: 26px;
  line-height: 28px;
}

.sent .time {
  color: #6fb1a3;
}

.time.inline {
  margin-top: -24px;
}

.emoji {
  margin: 0 4px;
  vertical-align: -8px;
  color: #fcc74e;
}

.emoji.light {
  color: #fbe3d6;
}

.tail {
  position: absolute;
  bottom: 0;
  left: -12px;
  color: #373739;
}

.sent .tail {
  left: auto;
  right: -12px;
  color: #005145;
  transform: scaleX(-1);
}

.reaction {
  position: absolute;
  top: 100%;
  left: 22px;
  display: flex;
  align-items: center;
  justify-content: center;
  width: 74px;
  height: 54px;
  margin-top: -8px;
  border: 1px solid #0d1715;
  border-radius: 27px;
  background: #38393b;
}

.date {
  flex: none;
  align-self: center;
  margin: 111px 0 20px;
  padding: 8px 40px;
  border-radius: 20px;
  background: #1c1c1d;
  color: #a6a6a8;
  font-size: 26px;
  font-weight: 600;
  line-height: 30px;
}

.scrollbar {
  position: absolute;
  right: 6px;
  bottom: 6px;
  width: 6px;
  height: 34%;
  border-radius: 3px;
  background: #808082;
}

/* footer */

.footer {
  flex: none;
  height: 17px;
  padding: 14px 222px 0 120px;
  border-top: 1px solid #262627;
  background: #161617;
  overflow: hidden;
}

.compose {
  height: 50px;
  border: 1px solid #3a3a3c;
  border-radius: 25px;
  background: #1e1e1f;
}
```
